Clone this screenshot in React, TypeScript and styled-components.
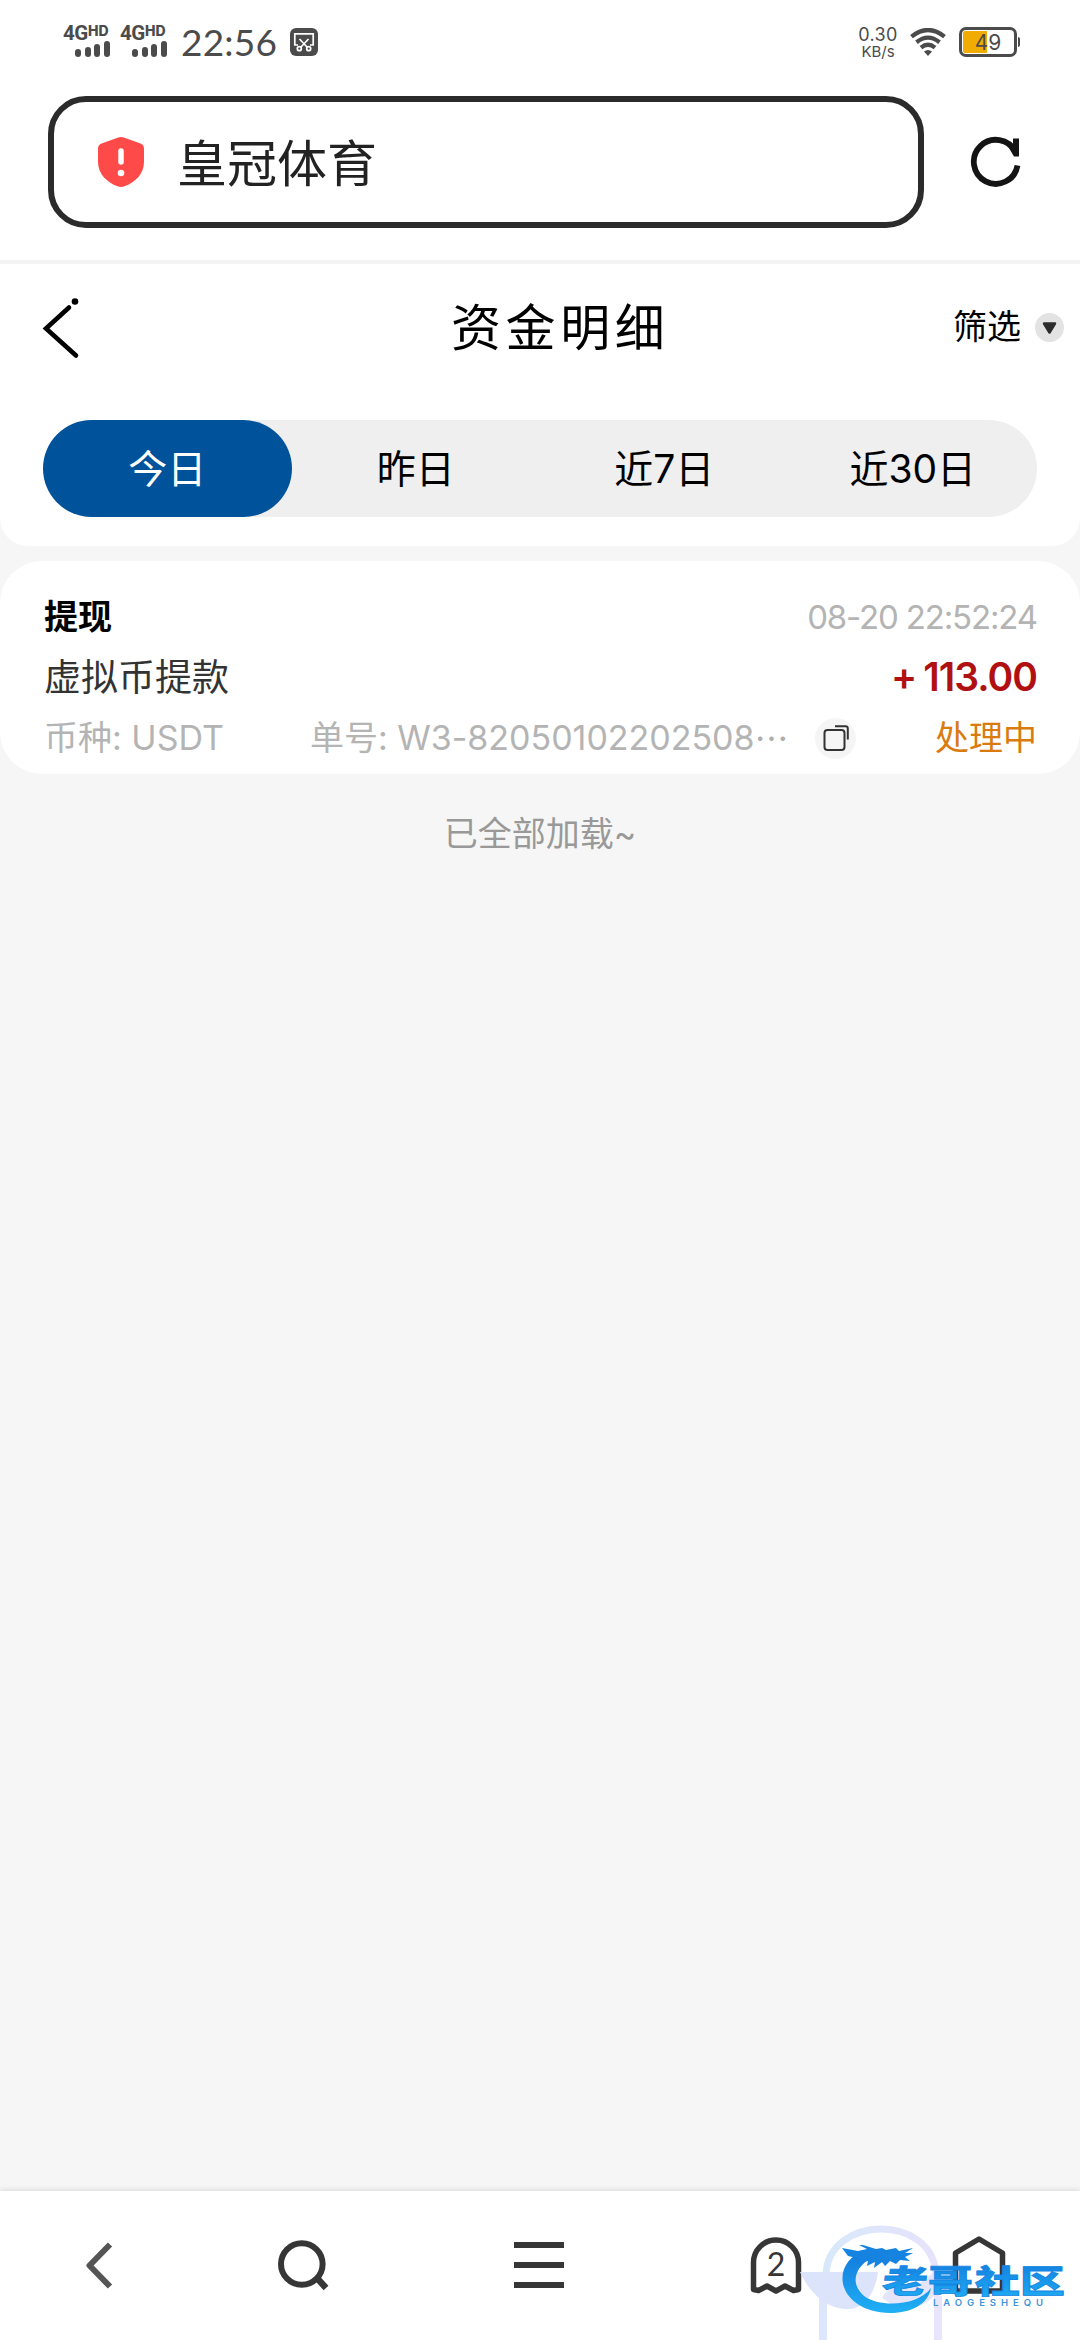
import React from 'react';
import styled, { createGlobalStyle } from 'styled-components';

const Global = createGlobalStyle`
  * { box-sizing: border-box; }
  html, body { margin: 0; padding: 0; background: #f6f6f6; }
  body { font-family: Inter, "Noto Sans CJK SC", sans-serif; color: #000; }
  svg { display: block; flex: none; }
`;

const Screen = styled.div`
  position: relative;
  display: flex;
  flex-direction: column;
  width: 1080px;
  height: 2340px;
  overflow: hidden;
  background: #f6f6f6;
`;

const Text = styled.span<{ $size: number; $line?: number; $color?: string; $weight?: number; $track?: number }>`
  font-size: ${p => p.$size}px;
  line-height: ${p => p.$line ?? p.$size}px;
  color: ${p => p.$color ?? '#000'};
  font-weight: ${p => p.$weight ?? 400};
  letter-spacing: ${p => p.$track ?? 0}px;
  white-space: pre;
`;

const StatusBar = styled.header`
  display: flex;
  justify-content: space-between;
  height: 84px;
  padding: 0 60px 0 63px;
  background: #fff;
`;
const StatusSide = styled.div`
  display: flex;
  align-items: center;
`;
const Signal = styled.div`
  display: flex;
  flex-direction: column;
  width: 57px;
  padding-bottom: 3px;
  color: #4b4b4b;
`;
const SignalLabel = styled.div`
  display: flex;
  align-items: flex-start;
  height: 16px;
  font: 700 20.5px/16px Roboto, sans-serif;
  letter-spacing: -0.4px;
`;
const SignalSup = styled.span`
  font: 800 14px/11px Inter, sans-serif;
  letter-spacing: 0;
`;
const SignalBars = styled.div`
  display: flex;
  align-items: flex-end;
  gap: 3.6px;
  padding-left: 12px;
  height: 16px;
`;
const Bar = styled.i<{ $h: number }>`
  width: 6px;
  height: ${p => p.$h}px;
  border-radius: 3px;
  background: #4b4b4b;
`;
const Clock = styled.time`
  width: 109px;
  margin-left: 4px;
  font: 400 37px/84px Lato, sans-serif;
  letter-spacing: 0.2px;
  color: #4b4b4b;
`;
const Speed = styled.div`
  display: flex;
  flex-direction: column;
  align-items: center;
  width: 40px;
  margin-right: 12px;
  padding-top: 2px;
`;
const Battery = styled.div`
  display: flex;
  align-items: center;
  margin-left: 13px;
`;
const BatteryShell = styled.div`
  display: flex;
  align-items: center;
  justify-content: center;
  width: 58px;
  height: 30px;
  border: 3px solid #4b4b4b;
  border-radius: 7px;
  padding: 1px;
`;
const BatteryFill = styled.div`
  flex: 1;
  height: 22px;
  border-radius: 2px;
  background: linear-gradient(90deg, #f0ac00 47%, #fff 47%);
  font: 400 21px/23px Inter, sans-serif;
  color: #4b4b4b;
  text-align: center;
`;
const BatteryTip = styled.i`
  width: 2px;
  height: 10px;
  margin-left: 1px;
  border-radius: 0 2px 2px 0;
  background: #4b4b4b;
`;

const AddressRow = styled.div`
  display: flex;
  align-items: flex-start;
  height: 180px;
  padding: 12px 48px 0;
  border-bottom: 4px solid #f4f4f4;
  background: #fff;
`;
const AddressBox = styled.div`
  display: flex;
  align-items: center;
  width: 876px;
  height: 132px;
  padding-left: 43px;
  gap: 32px;
  border: 6px solid #2b2b2b;
  border-radius: 38px;
`;
const SiteName = styled.span`
  padding-top: 3px;
  font-size: 50px;
  line-height: 60px;
  color: #222;
`;
const Reload = styled.div`
  padding: 38px 0 0 45px;
`;

const PageHead = styled.section`
  display: flex;
  flex-direction: column;
  height: 282px;
  border-radius: 0 0 28px 28px;
  background: #fff;
`;
const TitleRow = styled.div`
  display: flex;
  align-items: center;
  height: 126px;
  padding: 0 16px 0 40px;
`;
const Title = styled.h1`
  flex: 1;
  margin: 0;
  padding: 2px 0 0 369px;
  font-size: 50px;
  line-height: 60px;
  font-weight: 400;
  letter-spacing: 4.6px;
`;
const Filter = styled.div`
  display: flex;
  align-items: center;
  gap: 14px;
`;
const Tabs = styled.nav`
  display: flex;
  height: 97px;
  margin: 30px 43px 0;
  border-radius: 49px;
  background: #efefef;
`;
const Tab = styled.button<{ $active?: boolean }>`
  flex: 1;
  padding: 0;
  border: 0;
  border-radius: 49px;
  background: ${p => (p.$active ? '#00529b' : 'transparent')};
  color: ${p => (p.$active ? '#fff' : '#000')};
  font: 400 39px/97px Inter, "Noto Sans CJK SC", sans-serif;
`;

const Card = styled.article`
  display: flex;
  flex-direction: column;
  height: 213px;
  margin-top: 15px;
  padding: 26px 43px 0 44px;
  border-radius: 42px;
  background: #fff;
`;
const CardRow = styled.div`
  display: flex;
  align-items: center;
  justify-content: space-between;
  height: 60.5px;
`;
const Amount = styled.span`
  display: flex;
  align-items: center;
  gap: 7px;
  padding-bottom: 2px;
  font-size: 39px;
  line-height: 46px;
  font-weight: 600;
  letter-spacing: -1px;
  color: #b01012;
`;
const Sign = styled.span`
  padding-bottom: 2px;
`;
const Currency = styled.div`
  display: flex;
  width: 266px;
`;
const OrderNo = styled.div`
  display: flex;
  width: 505px;
`;
const Ellipsis = styled.span`
  font-family: "Noto Sans CJK SC", sans-serif;
  font-size: 34px;
  line-height: 44px;
  color: #adadad;
`;
const CopyButton = styled.button`
  display: flex;
  align-items: center;
  justify-content: center;
  width: 41px;
  height: 41px;
  padding: 0;
  border: 0;
  border-radius: 50%;
  background: #f5f5f5;
`;
const Status = styled.div`
  display: flex;
  flex: 1;
  justify-content: flex-end;
`;
const LoadedAll = styled.p`
  margin: 0;
  padding-top: 36px;
  text-align: center;
`;

const Feed = styled.main`
  flex: 1;
`;
const BottomBar = styled.footer`
  display: flex;
  align-items: center;
  height: 149px;
  padding-left: 80px;
  background: #fff;
  box-shadow: 0 -1px 5px rgba(0, 0, 0, 0.12);
`;
const NavItem = styled.div<{ $width: number }>`
  width: ${p => p.$width}px;
`;
const TabCount = styled.div`
  display: grid;
  width: 60px;
  height: 60px;
  & > * { grid-area: 1 / 1; }
`;
const CountLabel = styled.span`
  font: 400 32px/56px Lato, sans-serif;
  color: #363636;
  text-align: center;
`;

const Watermark = styled.div`
  position: absolute;
  left: 796px;
  top: 2222px;
  width: 284px;
  height: 118px;
`;

const SignalBlock = () => (
  <Signal>
    <SignalLabel>4G<SignalSup>HD</SignalSup></SignalLabel>
    <SignalBars>
      <Bar $h={8} /><Bar $h={10} /><Bar $h={13} /><Bar $h={16} />
    </SignalBars>
  </Signal>
);

const tabs = ['今日', '昨日', '近7日', '近30日'];

export default function App() {
  return (
    <Screen>
      <Global />
      <StatusBar>
        <StatusSide>
          <SignalBlock />
          <SignalBlock />
          <Clock>22:56</Clock>
          <svg width="28" height="28" viewBox="0 0 28 28">
            <rect width="28" height="28" rx="6" fill="#4b4b4b" />
            <g fill="none" stroke="#fff" strokeWidth="1.7">
              <path d="M8 17H4.8V5.8h18.4V17H20" />
              <path d="M9.5 11l8 8.5M18.5 11l-8 8.5" />
              <circle cx="9.3" cy="20.7" r="2" />
              <circle cx="18.7" cy="20.7" r="2" />
            </g>
          </svg>
        </StatusSide>
        <StatusSide>
          <Speed>
            <Text $size={18} $line={17} $color="#4b4b4b" $track={0.3}>0.30</Text>
            <Text $size={15} $line={17} $color="#4b4b4b">KB/s</Text>
          </Speed>
          <svg width="36" height="28" viewBox="0 0 36 28">
            <g fill="none" stroke="#4b4b4b" strokeWidth="4.3">
              <path d="M1.5 8.6Q18-4.6 34.5 8.6" />
              <path d="M6.5 14.2Q18 5 29.5 14.2" />
              <path d="M11 19.6Q18 14 25 19.6" />
            </g>
            <path d="M18 28l-4-4.5q4-3 8 0z" fill="#4b4b4b" />
          </svg>
          <Battery>
            <BatteryShell><BatteryFill>49</BatteryFill></BatteryShell>
            <BatteryTip />
          </Battery>
        </StatusSide>
      </StatusBar>

      <AddressRow>
        <AddressBox>
          <svg width="48" height="50" viewBox="0 0 48 50">
            <path d="M20.5.7q3.5-1.2 7 0L43.5 6.6Q47 8 47 11.5V25c0 12-9 20.5-19.5 24.3q-3.5 1.2-7 0C10 45.5 1 37 1 25V11.5Q1 8 4.5 6.6z" fill="#ff4a4a" />
            <path d="M24 14v11" stroke="#fff" strokeWidth="5.5" strokeLinecap="round" />
            <circle cx="24" cy="36" r="3.3" fill="#fff" />
          </svg>
          <SiteName>皇冠体育</SiteName>
        </AddressBox>
        <Reload>
          <svg width="54" height="54" viewBox="0 0 54 54" fill="none" stroke="#141414" strokeWidth="5.8">
            <path d="M48.5 31.5A22 22 0 1 1 46.5 18" />
            <path d="M50 4.500v18h-5L40 14l4-1V4.500z" stroke="none" fill="#141414" />
          </svg>
        </Reload>
      </AddressRow>

      <PageHead>
        <TitleRow>
          <svg width="42" height="64" viewBox="0 0 42 64" fill="none" stroke="#000" strokeWidth="4.6">
            <path d="M29 12.5L6 33.5l30 27" strokeLinecap="round" />
            <circle cx="35" cy="6.5" r="3.3" fill="#000" stroke="none" />
          </svg>
          <Title>资金明细</Title>
          <Filter>
            <Text $size={34} $line={44}>筛选</Text>
            <svg width="29" height="29" viewBox="0 0 29 29">
              <circle cx="14.5" cy="14.5" r="14.5" fill="#e3e3e3" />
              <path d="M9 10.5h11l-5.500 9z" fill="#2c2c2c" stroke="#2c2c2c" strokeWidth="2.5" strokeLinejoin="round" />
            </svg>
          </Filter>
        </TitleRow>
        <Tabs>
          {tabs.map((t, i) => <Tab key={t} $active={i === 0}>{t}</Tab>)}
        </Tabs>
      </PageHead>

      <Feed>
        <Card>
          <CardRow>
            <Text $size={34} $line={44} $weight={700}>提现</Text>
            <Text $size={33} $line={44} $color="#b4b4b4" $track={-1.15}>08-20 22:52:24</Text>
          </CardRow>
          <CardRow>
            <Text $size={37} $line={48} $color="#333">虚拟币提款</Text>
            <Amount><Sign>+</Sign><span>113.00</span></Amount>
          </CardRow>
          <CardRow>
            <Currency><Text $size={34} $line={44} $color="#b4b4b4">币种: USDT</Text></Currency>
            <OrderNo>
              <Text $size={34} $line={44} $color="#b4b4b4" $track={-0.02}>单号: W3-82050102202508</Text>
              <Ellipsis>…</Ellipsis>
            </OrderNo>
            <CopyButton>
              <svg width="26" height="26" viewBox="0 0 26 26" fill="none" stroke="#333" strokeWidth="2">
                <rect x="1.5" y="5" width="20" height="20" rx="3" />
                <path d="M12 1.2h10.500q2.300 0 2.300 2.300V14.5" />
              </svg>
            </CopyButton>
            <Status><Text $size={34} $line={44} $color="#d97b0f">处理中</Text></Status>
          </CardRow>
        </Card>
        <LoadedAll><Text $size={34} $line={48} $color="#999">已全部加载~</Text></LoadedAll>
      </Feed>

      <BottomBar>
        <NavItem $width={192}>
          <svg width="40" height="60" viewBox="0 0 40 60" fill="none" stroke="#555" strokeWidth="6">
            <path d="M30 8.500L9.500 29.500l20.500 21" strokeLinejoin="round" />
          </svg>
        </NavItem>
        <NavItem $width={234}>
          <svg width="60" height="60" viewBox="0 0 60 60" fill="none" stroke="#363636" strokeWidth="6">
            <circle cx="29.8" cy="28" r="20.8" />
            <path d="M44 41l10 11" strokeWidth="6.5" />
          </svg>
        </NavItem>
        <NavItem $width={240}>
          <svg width="66" height="60" viewBox="0 0 66 60" fill="#363636">
            <rect x="8" y="6" width="50" height="6" />
            <rect x="8" y="26" width="50" height="6" />
            <rect x="8" y="46" width="50" height="6" />
          </svg>
        </NavItem>
        <NavItem $width={203}>
          <TabCount>
            <svg width="60" height="60" viewBox="0 0 60 60" fill="none" stroke="#363636" strokeWidth="5.5" strokeLinejoin="round">
              <path d="M7.500 53.500V26.500a22.500 22.500 0 0 1 45 0V53.500l-5 1L39 50l-9 5-9-5-8.500 4.500z" />
            </svg>
            <CountLabel>2</CountLabel>
          </TabCount>
        </NavItem>
        <NavItem $width={60}>
          <svg width="60" height="64" viewBox="0 0 60 64" fill="none" stroke="#363636" strokeWidth="5.5" strokeLinejoin="round">
            <path d="M6.500 57V19L30 5l23.500 14V57z" />
          </svg>
        </NavItem>
      </BottomBar>

      <Watermark>
        <svg width="284" height="118" viewBox="796 2222 284 118">
          <defs>
            <linearGradient id="sea" x1="0" y1="0" x2="0" y2="1">
              <stop offset="0" stopColor="#1178dc" />
              <stop offset="1" stopColor="#1fb0f5" />
            </linearGradient>
            <linearGradient id="pale" x1="0" y1="0" x2="1" y2="0">
              <stop offset="0" stopColor="#d8e8fb" />
              <stop offset="1" stopColor="#e6e3fb" />
            </linearGradient>
          </defs>
          <path d="M823 2340V2296" stroke="#dde6fb" strokeWidth="8" />
          <path d="M938 2340V2296" stroke="#e8e4fb" strokeWidth="8" />
          <path d="M826 2296V2274C829 2215 932 2213 936 2274V2296" fill="none" stroke="url(#pale)" strokeWidth="7" />
          <path d="M800 2272H878C874 2298 862 2309 848 2309C830 2309 812 2298 800 2272z" fill="#dbe4fa" />
          <path d="M882 2298q8-16 34-12l18-14v24q-12 13-30 12-12-2-22-10z" fill="#e4e4fb" />
          <path d="M866 2250C828 2262 836 2312 890 2313C912 2313 928 2304 931 2288C918 2306 880 2308 864 2296C848 2282 856 2264 878 2254z" fill="url(#sea)" />
          <path d="M842 2248l16 3 9-2-8-4 4 0 13 4 6-1 4 2 10-2 3 3 14-3-8 5h8l-8 4 5 4-10-1-4 4-6-3-5 5-3-4-8 6 1-6-8 4 1-5-9 2-2-5-9-2z" fill="#1583df" />
          <g fill="url(#sea)" stroke="#1686e2" strokeWidth="0.8" fontFamily="Noto Sans CJK SC" fontWeight="900">
            <text transform="translate(881 2293) skewX(-8) scale(1.4 1)" fontSize="32">老</text>
            <text transform="translate(928 2293) scale(1.4 1)" fontSize="32">哥</text>
            <text transform="translate(975 2293) scale(1.4 1)" fontSize="32">社</text>
            <text transform="translate(1020 2293) scale(1.4 1)" fontSize="32">区</text>
          </g>
          <text x="933" y="2306" fontFamily="Inter" fontWeight="600" fontSize="9.5" fill="#3f93dc" textLength="110">LAOGESHEQU</text>
        </svg>
      </Watermark>
    </Screen>
  );
}
